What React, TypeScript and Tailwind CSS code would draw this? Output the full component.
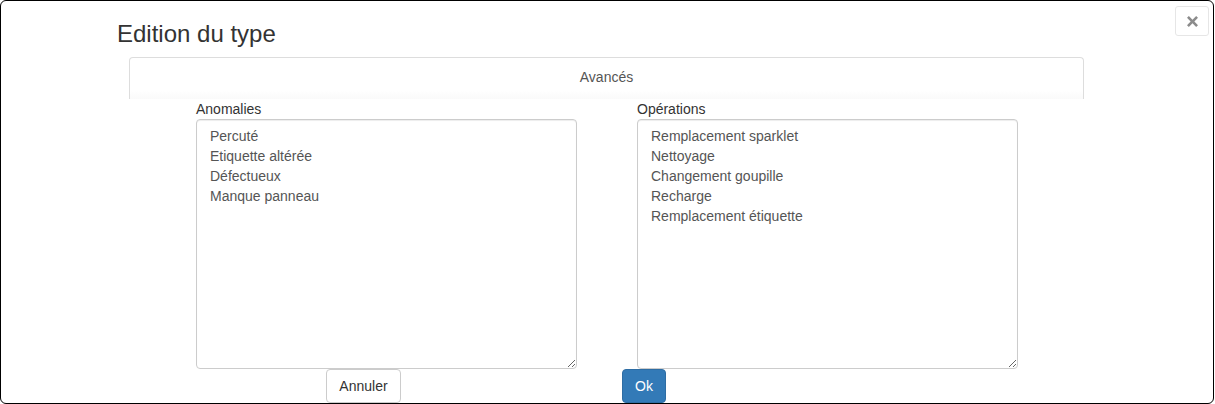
import React from "react";

const anomalies = ["Percuté", "Etiquette altérée", "Défectueux", "Manque panneau"];
const operations = [
  "Remplacement sparklet",
  "Nettoyage",
  "Changement goupille",
  "Recharge",
  "Remplacement étiquette",
];

function ListField({ label, items }: { label: string; items: string[] }) {
  return (
    <div className="flex flex-col w-[381px]">
      <label className="h-[20px] leading-[20px] text-[14px] text-[#333]">{label}</label>
      <textarea
        readOnly
        defaultValue={items.join("\n")}
        className="w-[381px] h-[250px] border border-[#ccc] rounded-[4px] pl-[13px] pr-[12px] pt-[6px] pb-[4px] text-[14px] leading-[20px] text-[#555] bg-white outline-none shadow-[inset_0_1px_1px_rgba(0,0,0,0.075)]"
      />
    </div>
  );
}

export default function App() {
  return (
    <div className="w-[1215px] h-[404px] bg-white font-['Liberation_Sans',Arial,sans-serif]">
      <div className="relative w-[1214px] h-[404px] border border-black rounded-[6px] overflow-hidden bg-white">
        {/* Close */}
        <button className="absolute left-[1174px] top-[5px] w-[34px] h-[30px] border border-[#e6e6e6] rounded-[3px] bg-white flex items-center justify-center">
          <svg width="11" height="11" viewBox="0 0 10 10">
            <path
              d="M1.7 0 L5 3.3 L8.3 0 L10 1.7 L6.7 5 L10 8.3 L8.3 10 L5 6.7 L1.7 10 L0 8.3 L3.3 5 L0 1.7 Z"
              fill="#8c8c8c"
            />
          </svg>
        </button>

        <h3 className="ml-[116px] mt-[20px] text-[24px] leading-[26px] text-[#333] font-normal">
          Edition du type
        </h3>

        {/* Tab header */}
        <div className="ml-[128px] mt-[10px] w-[955px] h-[42px] border-t border-x border-[#ddd] rounded-t-[4px] pt-[9px] text-center text-[14px] leading-[20px] text-[#555] bg-gradient-to-b from-white from-80% to-[#fafafa]">
          Avancés
        </div>

        {/* Lists */}
        <div className="flex ml-[195px] gap-[60px]">
          <ListField label="Anomalies" items={anomalies} />
          <ListField label="Opérations" items={operations} />
        </div>

        {/* Buttons */}
        <div className="flex ml-[325px]">
          <button className="w-[75px] h-[34px] border border-[#ccc] rounded-[4px] bg-white text-[14px] text-[#333]">
            Annuler
          </button>
          <button className="ml-[221px] w-[44px] h-[34px] border border-[#2e6da4] rounded-[4px] bg-[#337ab7] text-[14px] text-white">
            Ok
          </button>
        </div>
      </div>
    </div>
  );
}
